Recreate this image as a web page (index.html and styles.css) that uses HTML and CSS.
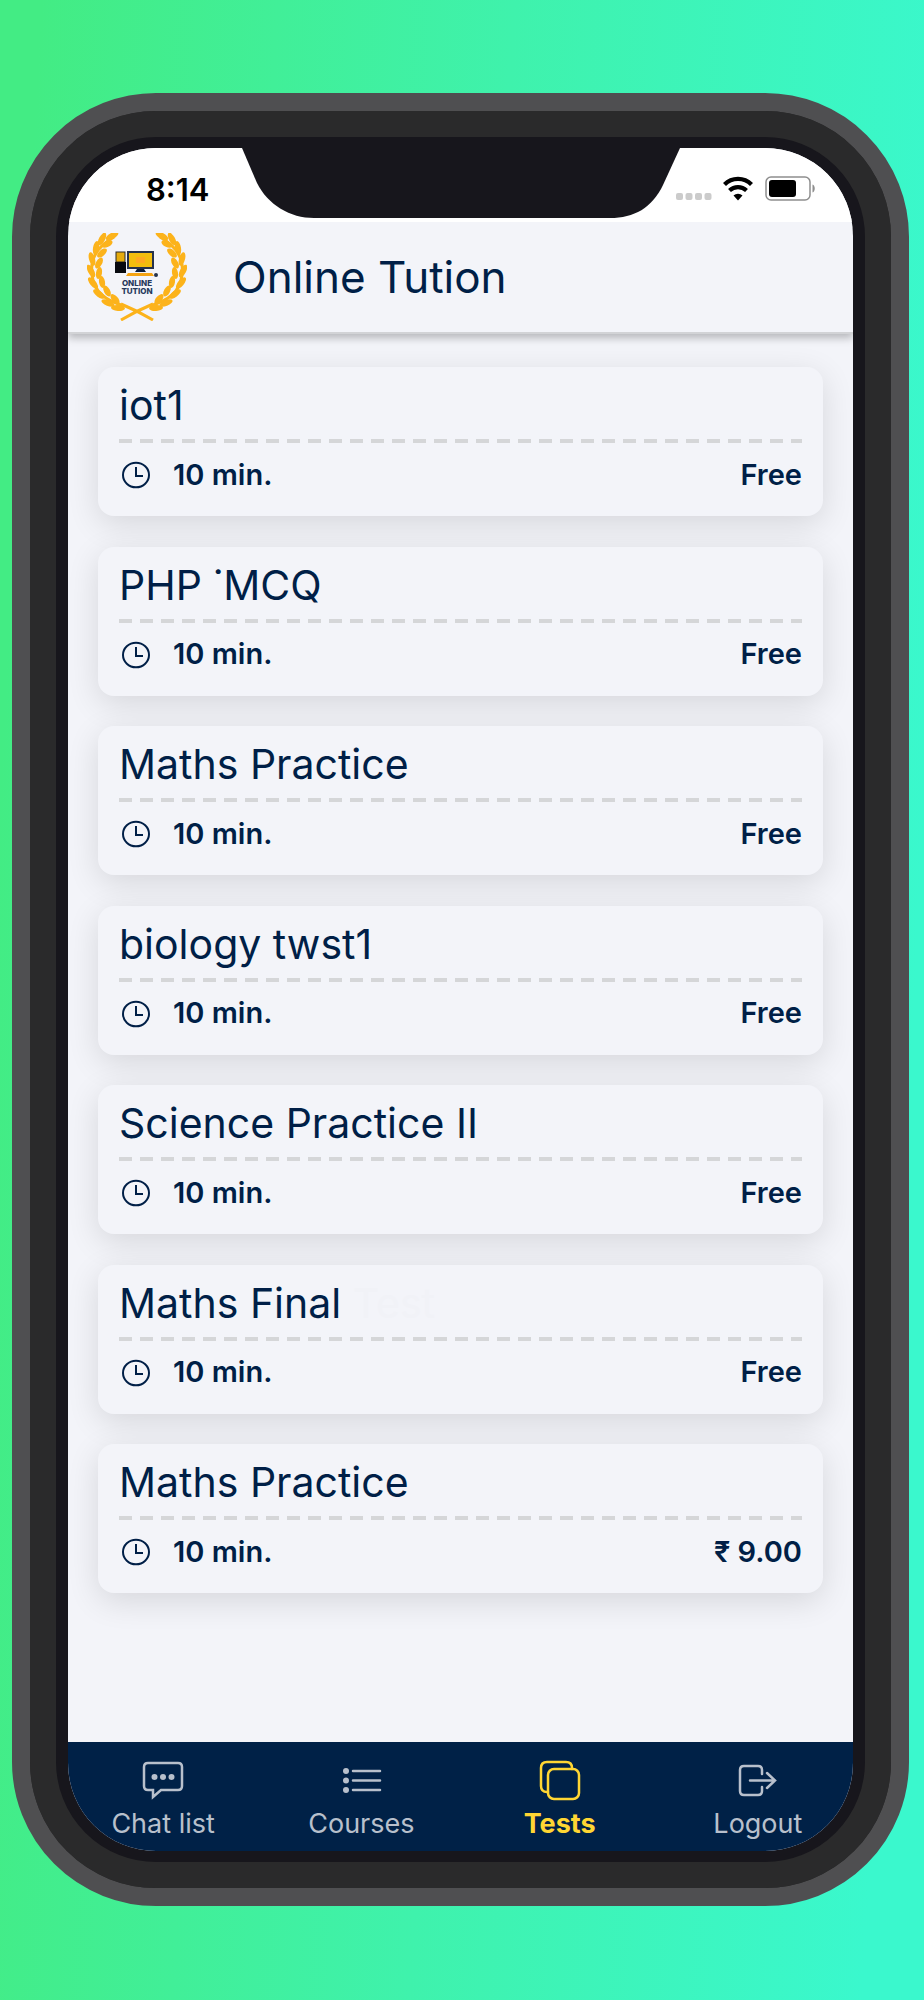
FILE: index.html
```html
<!DOCTYPE html>
<html lang="en">
  <head>
    <meta charset="utf-8">
    <meta name="viewport" content="width=device-width,initial-scale=1">
    <title>Online Tution</title>
    <link rel="stylesheet" href="styles.css">
  </head>
<body>
  <!-- shared icons -->
  <svg class="hidden">
    <symbol id="clock" viewBox="0 0 30 30">
      <ellipse cx="15" cy="15" rx="13" ry="12.3" />
      <path d="M15 7v9h7" />
    </symbol>
    <symbol id="branch" viewBox="0 0 50 88">
      <path class="stem" d="M27 4C9 14 3 28 5 42c2 17 13 25 32 31" />
      <g class="leaf">
        <ellipse cx="25" cy="3" rx="7" ry="3" transform="rotate(-28 25 3)" />
        <ellipse cx="15" cy="6" rx="7" ry="3" transform="rotate(-62 15 6)" />
        <ellipse cx="20" cy="11" rx="6" ry="3" transform="rotate(-25 20 11)" />
        <ellipse cx="9" cy="15" rx="7" ry="3" transform="rotate(-80 9 15)" />
        <ellipse cx="15" cy="20" rx="6" ry="3" transform="rotate(-42 15 20)" />
        <ellipse cx="5" cy="26" rx="7" ry="3" transform="rotate(75 5 26)" />
        <ellipse cx="12" cy="30" rx="6" ry="3" transform="rotate(-60 12 30)" />
        <ellipse cx="4" cy="38" rx="7" ry="3" transform="rotate(62 4 38)" />
        <ellipse cx="12" cy="40" rx="6" ry="3" transform="rotate(-80 12 40)" />
        <ellipse cx="6" cy="50" rx="7" ry="3" transform="rotate(50 6 50)" />
        <ellipse cx="15" cy="49" rx="6" ry="3" transform="rotate(80 15 49)" />
        <ellipse cx="12" cy="61" rx="7" ry="3" transform="rotate(36 12 61)" />
        <ellipse cx="20" cy="58" rx="6" ry="3" transform="rotate(62 20 58)" />
        <ellipse cx="21" cy="70" rx="7" ry="3" transform="rotate(22 21 70)" />
        <ellipse cx="28" cy="66" rx="6" ry="3" transform="rotate(48 28 66)" />
        <ellipse cx="31" cy="75" rx="7" ry="3" transform="rotate(5 31 75)" />
      </g>
    </symbol>
  </svg>

  <div class="phone">
    <div class="bezel">
      <div class="screen">
        <svg class="notch" viewBox="0 0 438 70">
          <path d="M0 0H438L421 37C410 60 392 70 368 70H72C48 70 26 57 15 35Z" />
        </svg>
        <div class="status-bar">
          <span class="time">8:14</span>
          <svg width="140" height="26" viewBox="0 0 140 26">
            <g fill="#cbcbcb">
              <rect x="0" y="17" width="7" height="7" rx="2" />
              <rect x="9.500" y="17" width="7" height="7" rx="2" />
              <rect x="19" y="17" width="7" height="7" rx="2" />
              <rect x="28.500" y="17" width="7" height="7" rx="2" />
            </g>
            <g fill="none" stroke="#000" stroke-width="4.200">
              <path d="M48.500 8.500a19 19 0 0 1 27 0" />
              <path d="M53.500 14.500a12.500 12.500 0 0 1 17 0" />
            </g>
            <path d="M57.500 19.500a6.500 6.500 0 0 1 9 0L62 24.500z" />
            <rect x="90" y="1" width="44" height="23" rx="5" fill="none" stroke="#8e8e8e" stroke-width="1.500" />
            <rect x="93" y="4" width="27" height="17" rx="3" />
            <path d="M136.500 8.500c3 1 3 7 0 8z" fill="#8e8e8e" />
          </svg>
        </div>

        <header class="header">
          <svg class="logo" width="100" height="88" viewBox="0 0 100 88">
            <use href="#branch" width="50" height="88" />
            <use href="#branch" width="50" height="88" transform="translate(100 0) scale(-1 1)" />
            <path class="stem" d="M34 71C46 76 56 81 66 87M66 71C54 76 44 81 34 87" />
            <rect x="29" y="19" width="9" height="10" fill="#e5ab0c" stroke="#2b2b2b" />
            <rect x="28" y="29" width="11" height="11" fill="#080a10" />
            <rect x="41" y="19" width="25" height="16" fill="#f3bd0e" stroke="#26324b" stroke-width="2" />
            <rect x="49" y="24" width="9" height="6" fill="#ffa91f" />
            <path d="M50 36h7l2 3H48z" fill="#0b1c3c" />
            <path d="M41 40h24l2 3H39z" fill="#f4a313" />
            <circle cx="69" cy="42" r="2" fill="#26324b" />
            <text x="50" y="53">ONLINE</text>
            <text x="50" y="61">TUTION</text>
          </svg>
          <h1>Online Tution</h1>
        </header>

        <main class="tests">
          <article class="card">
            <h2>iot1</h2>
            <div class="info"><svg class="clock"><use href="#clock" /></svg><span>10 min.</span><span class="price">Free</span></div>
          </article>
          <article class="card">
            <h2>PHP ˙MCQ</h2>
            <div class="info"><svg class="clock"><use href="#clock" /></svg><span>10 min.</span><span class="price">Free</span></div>
          </article>
          <article class="card">
            <h2>Maths Practice</h2>
            <div class="info"><svg class="clock"><use href="#clock" /></svg><span>10 min.</span><span class="price">Free</span></div>
          </article>
          <article class="card">
            <h2>biology twst1</h2>
            <div class="info"><svg class="clock"><use href="#clock" /></svg><span>10 min.</span><span class="price">Free</span></div>
          </article>
          <article class="card">
            <h2>Science Practice II</h2>
            <div class="info"><svg class="clock"><use href="#clock" /></svg><span>10 min.</span><span class="price">Free</span></div>
          </article>
          <article class="card">
            <h2>Maths Final <span class="faded">Test</span></h2>
            <div class="info"><svg class="clock"><use href="#clock" /></svg><span>10 min.</span><span class="price">Free</span></div>
          </article>
          <article class="card">
            <h2>Maths Practice</h2>
            <div class="info"><svg class="clock"><use href="#clock" /></svg><span>10 min.</span><span class="price">₹ 9.00</span></div>
          </article>
        </main>

        <nav class="tabs">
          <a href="#chat">
            <svg width="42" height="42" viewBox="0 0 42 42">
              <path d="M6 3H36Q40 3 40 7V26Q40 30 36 30H19L11 37V30H6Q2 30 2 26V7Q2 3 6 3Z" />
              <g class="dots"><circle cx="12.500" cy="17" r="3" /><circle cx="21" cy="17" r="3" /><circle cx="29.500" cy="17" r="3" /></g>
            </svg>
            Chat list
          </a>
          <a href="#courses">
            <svg width="42" height="42" viewBox="0 0 42 42">
              <path d="M13 11H40M13 20.500H40M13 30H40" />
              <g class="dots"><circle cx="6" cy="11" r="3" /><circle cx="6" cy="20.500" r="3" /><circle cx="6" cy="30" r="3" /></g>
            </svg>
            Courses
          </a>
          <a href="#tests" class="active">
            <svg width="42" height="42" viewBox="0 0 42 42">
              <rect x="9" y="9" width="31" height="30" rx="6" />
              <path d="M33 9V8Q33 2 27 2H8Q2 2 2 8V26Q2 32 8 32H9" />
            </svg>
            Tests
          </a>
          <a href="#logout">
            <svg width="42" height="42" viewBox="0 0 42 42">
              <path d="M25 14V10Q25 6 21 6H7Q3 6 3 10V31Q3 35 7 35H21Q25 35 25 31V27M13 20.500H38M30 13L38 20.500L30 28" />
            </svg>
            Logout
          </a>
        </nav>
      </div>
    </div>
  </div>
</body>
</html>
```

FILE: styles.css
```css
* {
  box-sizing: border-box;
}
html, body {
  padding: 0;
  margin: 0;
}
body {
  min-height: 100vh;
  display: flex;
  padding: 93px 15px 94px 12px;
  background: linear-gradient(93deg, #43ec84 4%, #3ff2ac 50%, #3af8cd 94%);
  font-family: Inter, "Noto Sans", sans-serif;
  font-optical-sizing: none;
  color: #001f47;
}
.hidden {
  display: none;
}

/* phone frame */
.phone {
  flex: 1;
  display: flex;
  border: 18px solid #4f4f51;
  border-radius: 144px;
  background: #2a2a2b;
}
.bezel {
  flex: 1;
  display: flex;
  border: 26px solid #2a2a2b;
  border-radius: 126px;
  background: #17161c;
}
.screen {
  flex: 1;
  position: relative;
  display: flex;
  flex-direction: column;
  margin: 11px 12px;
  border-radius: 88px;
  overflow: hidden;
  background: #f3f4f9;
}
.notch {
  position: absolute;
  top: 0;
  left: 50%;
  width: 438px;
  height: 70px;
  margin-left: -219px;
  fill: #17161c;
}
.status-bar {
  height: 74px;
  display: flex;
  align-items: center;
  justify-content: space-between;
  padding: 8px 37px 0 78px;
  background: #fff;
}
.time {
  font-size: 31px;
  font-weight: 600;
  color: #000;
}

.header {
  height: 112px;
  flex: none;
  display: flex;
  align-items: center;
  gap: 46px;
  padding: 0 19px;
  border-bottom: 2px solid #d2d3d6;
  box-shadow: 0 4px 8px rgba(0, 0, 0, 0.25);
  clip-path: inset(0 0 -16px);
}
.logo text {
  font-size: 8px;
  font-weight: 800;
  text-anchor: middle;
  fill: #26385c;
}
.stem {
  fill: none;
  stroke: #fcb31b;
  stroke-width: 3;
}
.leaf {
  fill: #fcb31b;
}
h1, h2 {
  margin: 0;
  font-weight: 400;
}
h1 {
  font-size: 44px;
  line-height: 48px;
}

/* test list */
.tests {
  flex: 1;
  display: flex;
  flex-direction: column;
  justify-content: space-between;
  gap: 16px;
  padding: 33px 30px 149px;
}
.card {
  height: 149px;
  padding: 8px 21px;
  border-radius: 16px;
  background: #f3f4f9;
  box-shadow: 0 8px 32px rgba(0, 0, 0, 0.12);
}
h2 {
  height: 64px;
  font-size: 41px;
  line-height: 60px;
}
.faded {
  color: #f1f2f7;
}
.info {
  display: flex;
  align-items: center;
  height: 70px;
  font-size: 29px;
  font-weight: 600;
  /* dashed divider */
  background: repeating-linear-gradient(90deg, #d5d6d8 0 13px, transparent 13px 21px) top / 100% 4px no-repeat;
}
.clock {
  width: 30px;
  height: 30px;
  margin: 2px 22px 0 2px;
  fill: none;
  stroke: #001f47;
  stroke-width: 2;
}
.price {
  margin-left: auto;
}

/* bottom tabs */
.tabs {
  height: 109px;
  display: flex;
  margin: 0 -4px;
  padding-top: 18px;
  background: #002147;
}
.tabs a {
  flex: 1 1 0;
  display: flex;
  flex-direction: column;
  align-items: center;
  gap: 6px;
  font-size: 27px;
  line-height: 32px;
  color: #b8c0cc;
  text-decoration: none;
}
.tabs .active {
  color: #ffd633;
  font-weight: 700;
}
.tabs svg {
  fill: none;
  stroke: currentColor;
  stroke-width: 2.500;
  stroke-linecap: round;
}
.dots {
  fill: currentColor;
  stroke: none;
}
```
